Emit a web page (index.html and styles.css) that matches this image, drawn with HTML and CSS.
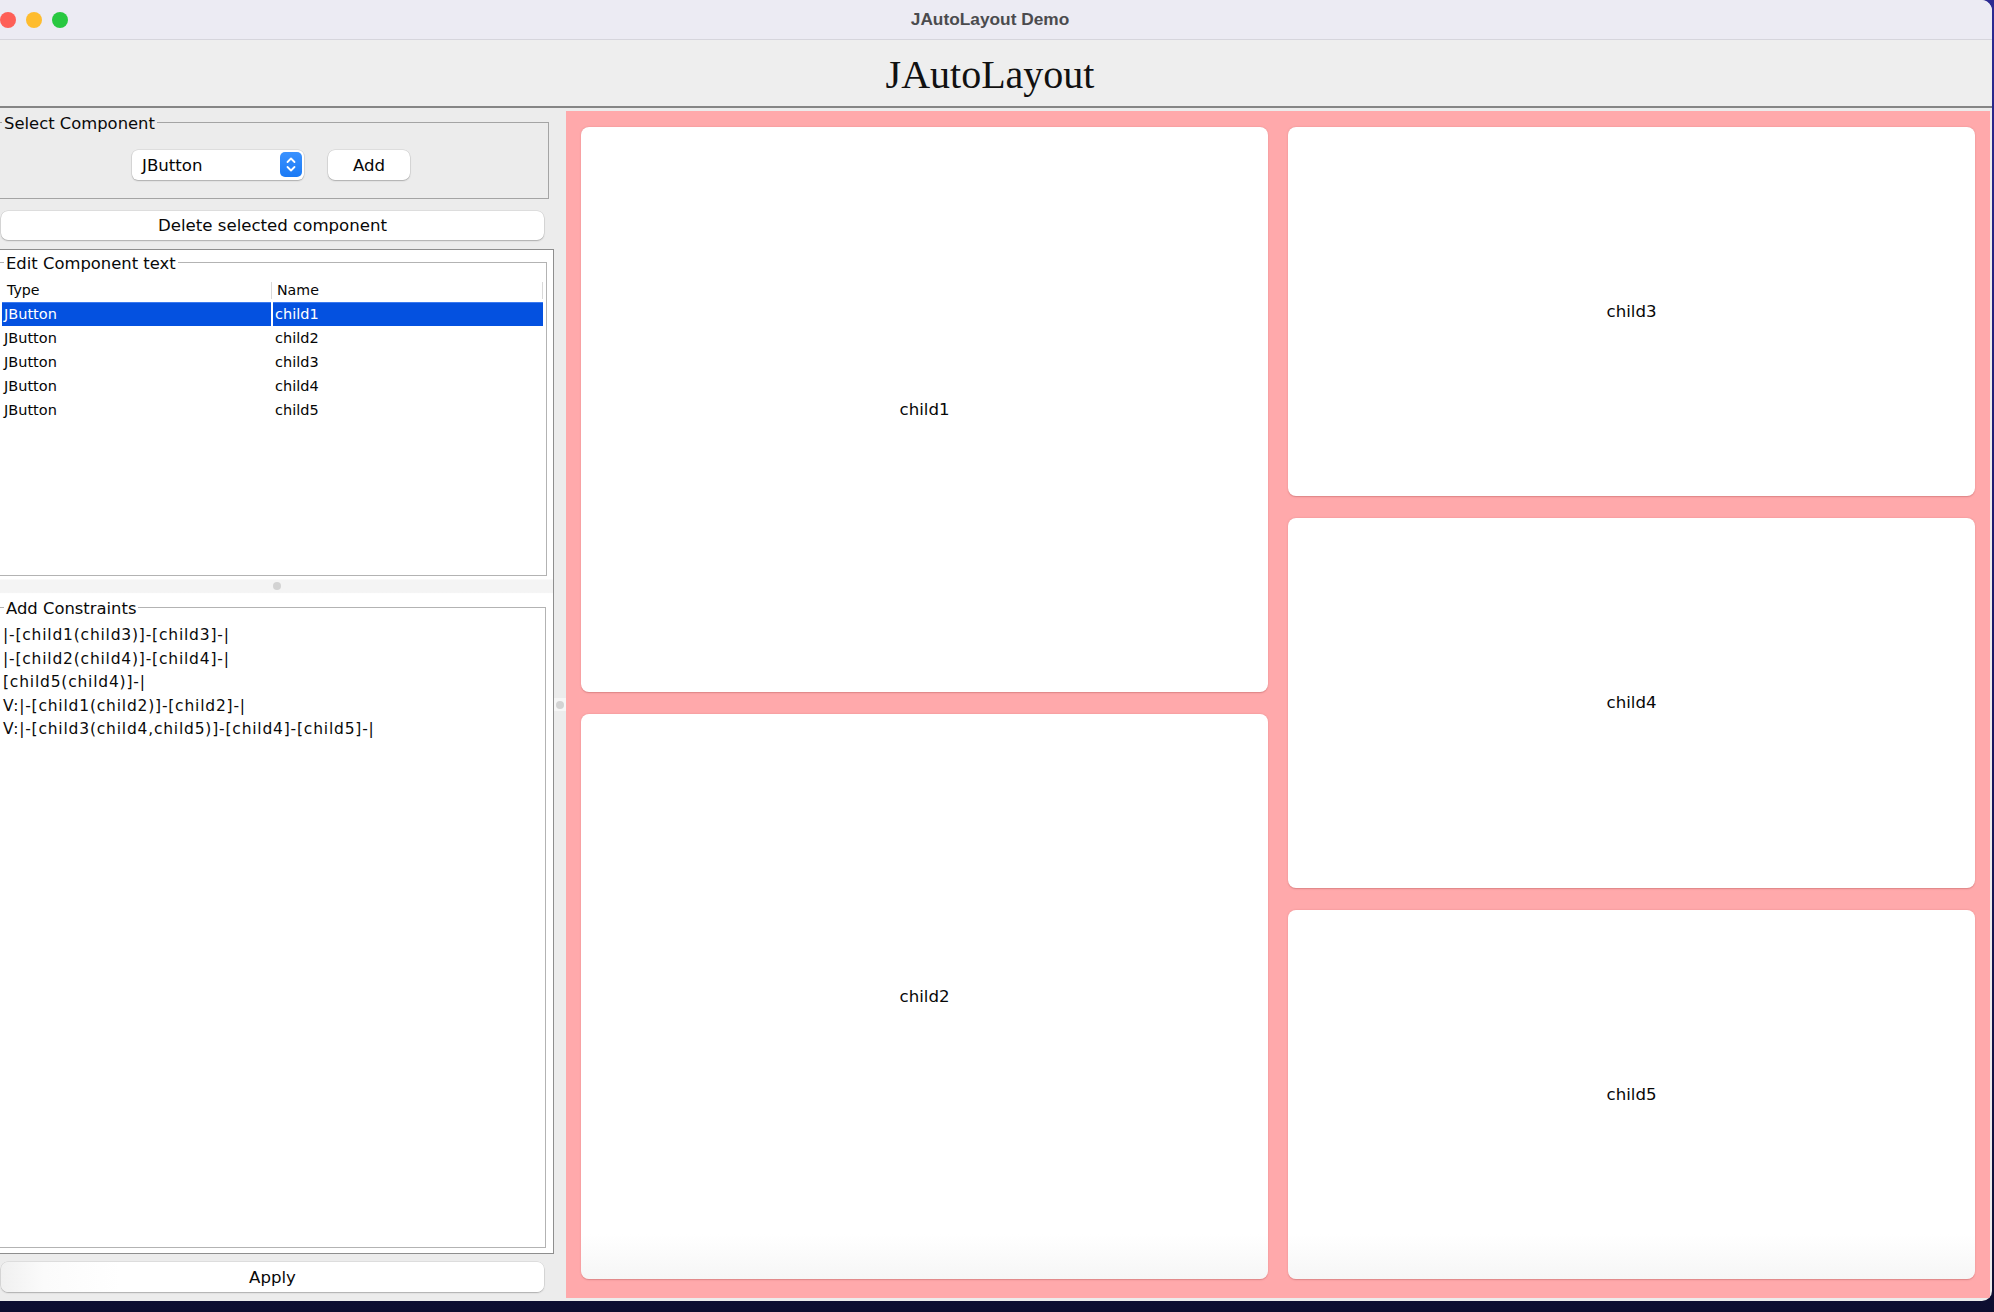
FILE: index.html
```html
<!DOCTYPE html>
<html lang="en">
<head>
<meta charset="utf-8">
<title>JAutoLayout Demo</title>
<link rel="stylesheet" href="styles.css">
</head>
<body>
<div class="window">
  <div class="titlebar">
    <div class="lights">
      <span class="light red"></span>
      <span class="light yellow"></span>
      <span class="light green"></span>
    </div>
    <div class="wintitle">JAutoLayout Demo</div>
    <div></div>
  </div>
  <div class="header">JAutoLayout</div>
  <div class="main">
    <div class="left">
      <fieldset class="group select-group">
        <legend>Select Component</legend>
        <div class="select-row">
          <div class="combo">
            <span class="combo-text">JButton</span>
            <span class="stepper">
              <svg width="22" height="25" viewBox="0 0 22 25"><path d="M7.5 10 L11 6.5 L14.5 10" fill="none" stroke="#fff" stroke-width="1.8" stroke-linecap="round" stroke-linejoin="round"/><path d="M7.5 15 L11 18.5 L14.5 15" fill="none" stroke="#fff" stroke-width="1.8" stroke-linecap="round" stroke-linejoin="round"/></svg>
            </span>
          </div>
          <button class="btn add">Add</button>
        </div>
      </fieldset>
      <button class="btn wide delete">Delete selected component</button>
      <div class="split">
        <fieldset class="group edit-group">
          <legend>Edit Component text</legend>
          <div class="table">
            <div class="thead">
              <div class="th">Type</div>
              <div class="th">Name</div>
            </div>
            <div class="tr selected"><div class="td">JButton</div><div class="td">child1</div></div>
            <div class="tr"><div class="td">JButton</div><div class="td">child2</div></div>
            <div class="tr"><div class="td">JButton</div><div class="td">child3</div></div>
            <div class="tr"><div class="td">JButton</div><div class="td">child4</div></div>
            <div class="tr"><div class="td">JButton</div><div class="td">child5</div></div>
          </div>
        </fieldset>
        <div class="hdivider"><span class="grip"></span></div>
        <fieldset class="group constraints-group">
          <legend>Add Constraints</legend>
          <div class="constraints">
            <div>|-[child1(child3)]-[child3]-|</div>
            <div>|-[child2(child4)]-[child4]-|</div>
            <div>[child5(child4)]-|</div>
            <div>V:|-[child1(child2)]-[child2]-|</div>
            <div>V:|-[child3(child4,child5)]-[child4]-[child5]-|</div>
          </div>
        </fieldset>
      </div>
      <button class="btn wide apply">Apply</button>
    </div>
    <div class="vdivider"><span class="grip-box"><span class="grip"></span></span></div>
    <div class="canvas">
      <div class="col">
        <div class="card">child1</div>
        <div class="card bottom">child2</div>
      </div>
      <div class="col">
        <div class="card">child3</div>
        <div class="card">child4</div>
        <div class="card bottom">child5</div>
      </div>
    </div>
  </div>
</div>
</body>
</html>
```
FILE: styles.css
```css
* { box-sizing: border-box; }
html, body { margin: 0; padding: 0; }
body {
  width: 1994px;
  height: 1312px;
  overflow: hidden;
  background: linear-gradient(180deg, #2c2a92 0%, #1a1866 50%, #0d0e30 100%);
  font-family: "DejaVu Sans", "Lucida Grande", sans-serif;
  color: #050505;
}
.window {
  width: 1992px;
  height: 1301px;
  background: #ececec;
  border-radius: 0 11px 10px 0;
  overflow: hidden;
  display: flex;
  flex-direction: column;
}
.titlebar {
  height: 40px;
  flex: none;
  background: #ecebf3;
  border-bottom: 1px solid #d6d5dc;
  display: grid;
  grid-template-columns: 1fr auto 1fr;
  align-items: center;
}
.lights { display: flex; gap: 10px; }
.light { width: 16px; height: 16px; border-radius: 50%; }
.red { background: #fe5f57; }
.yellow { background: #febc2e; }
.green { background: #28c840; }
.wintitle {
  font-family: "Liberation Sans", Arial, sans-serif;
  font-weight: bold;
  font-size: 17.3px;
  color: #4b4b4e;
  padding-right: 12px;
}
.header {
  height: 68px;
  flex: none;
  border-bottom: 2px solid #858585;
  background: #eeeeee;
  display: flex;
  align-items: center;
  justify-content: center;
  font-family: "Liberation Serif", "Times New Roman", serif;
  font-size: 40px;
  color: #111;
  padding-right: 12px;
  padding-top: 2px;
}
.main {
  flex: 1;
  display: flex;
  min-height: 0;
}
.left {
  width: 554px;
  flex: none;
  display: flex;
  flex-direction: column;
  padding-top: 3px;
  padding-bottom: 9px;
}
.group {
  margin: 0;
  padding: 0;
  min-width: 0;
  border: 1px solid #a9a9a9;
  border-left: none;
}
.group legend {
  font-size: 16.4px;
  line-height: 18px;
  padding: 4px 2px 0 2px;
  margin-left: 2px;
  color: #0a0a0a;
}
.select-group {
  margin-right: 5px;
  border-color: #a4a4a4;
}
.select-row {
  display: flex;
  justify-content: center;
  gap: 24px;
  padding: 17px 0 18px 0;
  margin-left: -6px;
}
.combo {
  width: 172px;
  height: 30px;
  background: #fff;
  border-radius: 6px;
  box-shadow: 0 0 0 0.5px rgba(0,0,0,0.12), 0 1px 1.5px rgba(0,0,0,0.22);
  display: flex;
  align-items: center;
  justify-content: space-between;
  padding: 0 2px 0 10px;
  font-size: 16.6px;
}
.stepper {
  width: 22px;
  height: 25px;
  border-radius: 5px;
  background: linear-gradient(180deg, #3b92ff 0%, #1a7af5 100%);
  display: flex;
  margin-top: -2px;
}
.btn {
  font-family: "DejaVu Sans", "Lucida Grande", sans-serif;
  font-size: 16.6px;
  color: #080808;
  background: #fff;
  border: none;
  border-radius: 7px;
  box-shadow: 0 0 0 0.5px rgba(0,0,0,0.12), 0 1px 1.5px rgba(0,0,0,0.22);
  padding: 0;
}
.add {
  width: 82px;
  height: 30px;
}
.wide {
  width: 543px;
  margin-left: 1px;
}
.delete {
  height: 29px;
  margin-top: 12px;
  flex: none;
}
.apply {
  height: 30px;
  margin-top: 8px;
  flex: none;
  background: linear-gradient(90deg, #f0f0f0 0%, #fbfbfb 8%, #ffffff 22%);
}
.split {
  flex: 1;
  margin-top: 9px;
  border: 1px solid #8e8e8e;
  border-left: none;
  background: #fff;
  display: flex;
  flex-direction: column;
  padding: 1px 6px 5px 0;
  min-height: 0;
}
.edit-group {
  height: 325px;
  flex: none;
  border-color: #b3b3b3;
}
.edit-group legend { margin-left: 4px; }
.table {
  margin: 7px 0 0 2px;
  width: 541px;
  font-size: 14.5px;
}
.thead {
  display: grid;
  grid-template-columns: 270px 1fr;
  height: 20px;
  align-items: center;
  margin-bottom: 2px;
}
.th {
  font-size: 14.2px;
  padding-left: 5px;
  height: 17px;
  line-height: 17px;
  border-right: 1px solid #d9d9d9;
}
.tr {
  display: grid;
  grid-template-columns: 269px 1fr;
  column-gap: 2px;
  height: 24px;
  align-items: center;
}
.td {
  padding-left: 2px;
  height: 100%;
  line-height: 24px;
}
.tr.selected .td {
  background: #0451e0;
  color: #fff;
  border-top: 1px solid #3b7af0;
  line-height: 22px;
}
.hdivider {
  height: 20px;
  flex: none;
  display: flex;
  align-items: center;
  justify-content: center;
  background: linear-gradient(180deg, #fff 0%, #fff 15%, #f4f4f4 20%, #f4f4f4 82%, #fff 88%);
  margin-right: -6px;
}
.grip {
  width: 8px;
  height: 8px;
  border-radius: 50%;
  background: #d3d3d3;
}
.constraints-group {
  flex: 1;
  border-color: #b3b3b3;
  margin-right: 1px;
}
.constraints-group legend { margin-left: 4px; }
.constraints {
  padding: 6px 0 0 3px;
  font-size: 15.5px;
  letter-spacing: 0.8px;
  line-height: 23.5px;
  color: #0a0a0a;
}
.vdivider {
  width: 12px;
  flex: none;
  display: flex;
  align-items: center;
  justify-content: center;
}
.grip-box {
  width: 12px;
  height: 13px;
  background: #f6f6f6;
  display: flex;
  align-items: center;
  justify-content: center;
}
.canvas {
  flex: 1;
  margin: 3px 2px 3px 0;
  background: #ffa9ab;
  padding: 16px 15px 19px 15px;
  display: grid;
  grid-template-columns: 1fr 1fr;
  column-gap: 20px;
}
.col {
  display: flex;
  flex-direction: column;
  gap: 22px;
}
.card {
  flex: 1;
  background: #fff;
  border-radius: 8px;
  box-shadow: 0 0.5px 1.5px rgba(150,60,60,0.35);
  display: flex;
  align-items: center;
  justify-content: center;
  font-size: 16.6px;
  color: #080808;
}
.card.bottom {
  background: linear-gradient(180deg, #fff 0%, #fff calc(100% - 45px), #f6f6f6 100%);
}
```
